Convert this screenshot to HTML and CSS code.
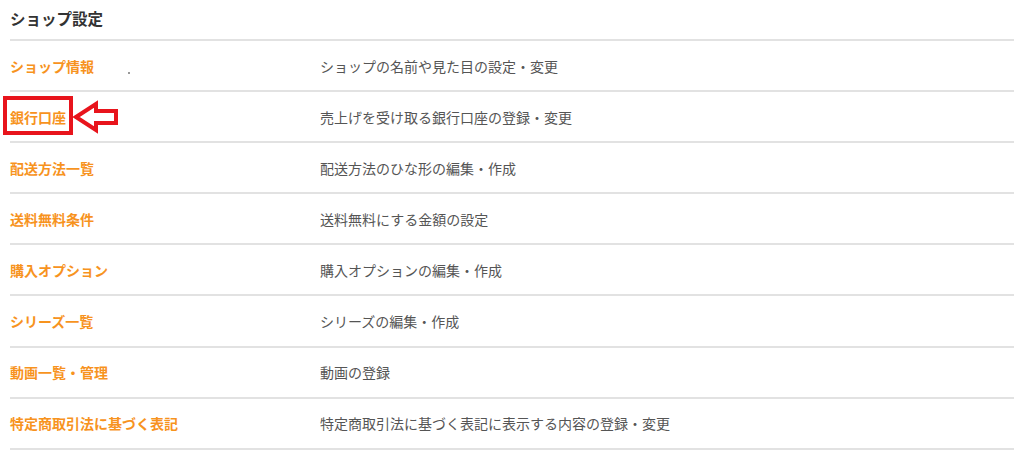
FILE: index.html
```html
<!DOCTYPE html>
<html lang="ja">
<head>
    <meta charset="UTF-8">
    <meta name="viewport" content="width=device-width, initial-scale=1.0">
    <title>ショップ設定</title>
    <link rel="stylesheet" href="styles.css">
</head>
<body>
    <div class="settings">
        <h2 class="settings-title">ショップ設定</h2>

        <ul class="settings-list">
            <li class="settings-row">
                <a class="settings-link" href="#">ショップ情報</a>
                <span class="settings-desc">ショップの名前や見た目の設定・変更</span>
                <span class="speck"></span>
            </li>
            <li class="settings-row">
                <a class="settings-link" href="#">銀行口座</a>
                <span class="settings-desc">売上げを受け取る銀行口座の登録・変更</span>
                <!-- annotation: red frame + arrow -->
                <span class="mark-box"></span>
                <svg class="mark-arrow" width="46" height="34" viewBox="0 0 46 34">
                    <path d="M3 17 L23 4 L23 11 L43 11 L43 23 L23 23 L23 30 Z"
                          fill="#fff" stroke="#e8141c" stroke-width="4" stroke-linejoin="miter"/>
                </svg>
            </li>
            <li class="settings-row">
                <a class="settings-link" href="#">配送方法一覧</a>
                <span class="settings-desc">配送方法のひな形の編集・作成</span>
            </li>
            <li class="settings-row">
                <a class="settings-link" href="#">送料無料条件</a>
                <span class="settings-desc">送料無料にする金額の設定</span>
            </li>
            <li class="settings-row">
                <a class="settings-link" href="#">購入オプション</a>
                <span class="settings-desc">購入オプションの編集・作成</span>
            </li>
            <li class="settings-row">
                <a class="settings-link" href="#">シリーズ一覧</a>
                <span class="settings-desc">シリーズの編集・作成</span>
            </li>
            <li class="settings-row">
                <a class="settings-link" href="#">動画一覧・管理</a>
                <span class="settings-desc">動画の登録</span>
            </li>
            <li class="settings-row">
                <a class="settings-link" href="#">特定商取引法に基づく表記</a>
                <span class="settings-desc">特定商取引法に基づく表記に表示する内容の登録・変更</span>
            </li>
        </ul>
    </div>
</body>
</html>
```

FILE: styles.css
```css
body {
    margin: 0;
    background: #fff;
    font-family: "Noto Sans CJK JP", "Noto Sans", sans-serif;
}
.settings {
    padding: 0 10px;
}
.settings-title {
    margin: 0;
    height: 39px;
    line-height: 36px;
    font-size: 15.5px;
    font-weight: bold;
    color: #333;
    border-bottom: 2px solid #e2e2e2;
}
.settings-list {
    list-style: none;
    margin: 0;
    padding: 0;
}
.settings-row {
    position: relative;
    display: grid;
    grid-template-columns: 310px 1fr;
    align-items: center;
    height: 49.1px;
    border-bottom: 2px solid #e2e2e2;
    font-size: 14px;
}
.settings-link {
    color: #f7931e;
    font-weight: bold;
    text-decoration: none;
}
.settings-desc {
    color: #555;
}
.speck {
    position: absolute;
    left: 118px;
    top: 31px;
    width: 2px;
    height: 2px;
    border-radius: 50%;
    background: #777;
}
.mark-box {
    position: absolute;
    left: -7px;
    top: 4px;
    width: 62px;
    height: 31px;
    border: 4px solid #e8141c;
}
.mark-arrow {
    position: absolute;
    left: 63px;
    top: 8px;
}
```
